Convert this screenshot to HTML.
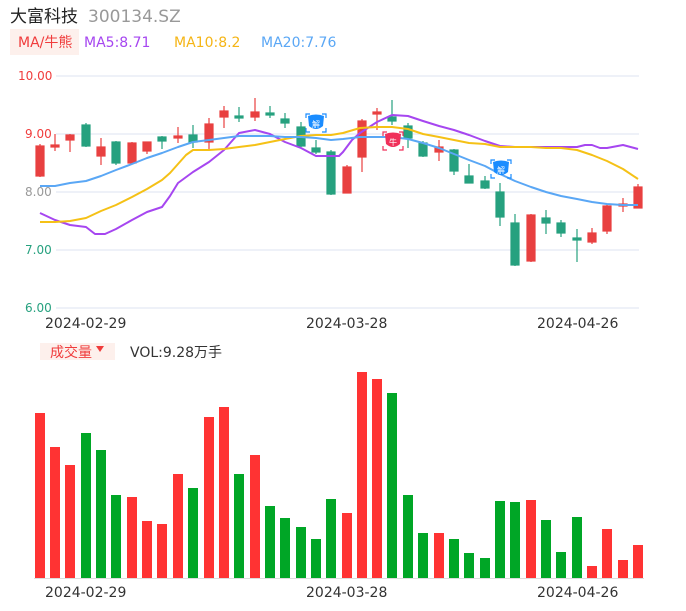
<!DOCTYPE html>
<html><head><meta charset="utf-8"><style>
body{margin:0;background:#fff;width:686px;height:606px;overflow:hidden;font-family:"Liberation Sans","Noto Sans CJK SC",sans-serif}
svg text{font-family:"DejaVu Sans","Noto Sans CJK SC",sans-serif}
</style></head><body>
<svg width="686" height="606" xmlns="http://www.w3.org/2000/svg">
<text x="10" y="22" font-size="17" fill="#222" font-family="'Noto Sans CJK SC',sans-serif">大富科技</text>
<text x="88" y="22" font-size="17" fill="#999">300134.SZ</text>
<rect x="10" y="29" width="69" height="26" fill="#fdf0ec"/>
<text x="18" y="47" font-size="14" fill="#f03c3c">MA/牛熊</text>
<text x="84" y="47" font-size="14" fill="#a646f0">MA5:8.71</text>
<text x="174" y="47" font-size="14" fill="#f5b516">MA10:8.2</text>
<text x="261" y="47" font-size="14" fill="#5aa7f5">MA20:7.76</text>
<g stroke="#dde3f0" stroke-width="1">
<line x1="56" y1="76" x2="639" y2="76"/><line x1="56" y1="134" x2="639" y2="134"/><line x1="56" y1="192" x2="639" y2="192"/><line x1="56" y1="250" x2="639" y2="250"/><line x1="56" y1="308" x2="639" y2="308"/>
</g>
<g font-size="12">
<text x="18" y="80" fill="#f03c3c">10.00</text>
<text x="25" y="138" fill="#f03c3c">9.00</text>
<text x="25" y="196" fill="#999">8.00</text>
<text x="25" y="254" fill="#26a17f">7.00</text>
<text x="25" y="312" fill="#26a17f">6.00</text>
</g>
<g font-size="14" fill="#333">
<text x="45" y="328">2024-02-29</text><text x="306" y="328">2024-03-28</text><text x="537" y="328">2024-04-26</text>
<text x="45" y="597">2024-02-29</text><text x="306" y="597">2024-03-28</text><text x="537" y="597">2024-04-26</text>
</g>
<g stroke-width="1.2">
<g fill="#e84040" stroke="#e84040">
<line x1="40" y1="144" x2="40" y2="177"/><rect x="36" y="146" width="8" height="30"/>
<line x1="55" y1="134" x2="55" y2="151"/><rect x="51" y="145" width="8" height="2"/>
<line x1="70" y1="134" x2="70" y2="152"/><rect x="66" y="135" width="8" height="5"/>
<line x1="101" y1="138" x2="101" y2="165"/><rect x="97" y="147" width="8" height="9"/>
<line x1="132" y1="142" x2="132" y2="164"/><rect x="128" y="143" width="8" height="20"/>
<line x1="147" y1="142" x2="147" y2="154"/><rect x="143" y="142" width="8" height="9"/>
<line x1="178" y1="127" x2="178" y2="143"/><rect x="174" y="136" width="8" height="2"/>
<line x1="209" y1="118" x2="209" y2="150"/><rect x="205" y="124" width="8" height="18"/>
<line x1="224" y1="106" x2="224" y2="128"/><rect x="220" y="111" width="8" height="6"/>
<line x1="255" y1="98" x2="255" y2="121"/><rect x="251" y="112" width="8" height="5"/>
<line x1="347" y1="165" x2="347" y2="193"/><rect x="343" y="167" width="8" height="26"/>
<line x1="362" y1="119" x2="362" y2="172"/><rect x="358" y="121" width="8" height="36"/>
<line x1="377" y1="108" x2="377" y2="130"/><rect x="373" y="112" width="8" height="2"/>
<line x1="439" y1="140" x2="439" y2="161"/><rect x="435" y="147" width="8" height="5"/>
<line x1="531" y1="214" x2="531" y2="262"/><rect x="527" y="215" width="8" height="46"/>
<line x1="592" y1="228" x2="592" y2="244"/><rect x="588" y="233" width="8" height="9"/>
<line x1="607" y1="204" x2="607" y2="234"/><rect x="603" y="206" width="8" height="25"/>
<line x1="623" y1="198" x2="623" y2="212"/><rect x="619" y="204" width="8" height="2"/>
<line x1="638" y1="184" x2="638" y2="208"/><rect x="634" y="187" width="8" height="21"/>
</g>
<g fill="#26a17f" stroke="#26a17f">
<line x1="86" y1="123" x2="86" y2="147"/><rect x="82" y="125" width="8" height="21"/>
<line x1="116" y1="141" x2="116" y2="165"/><rect x="112" y="142" width="8" height="21"/>
<line x1="162" y1="136" x2="162" y2="149"/><rect x="158" y="137" width="8" height="4"/>
<line x1="193" y1="125" x2="193" y2="148"/><rect x="189" y="135" width="8" height="7"/>
<line x1="239" y1="107" x2="239" y2="122"/><rect x="235" y="116" width="8" height="2"/>
<line x1="270" y1="106" x2="270" y2="118"/><rect x="266" y="113" width="8" height="2"/>
<line x1="285" y1="113" x2="285" y2="128"/><rect x="281" y="119" width="8" height="4"/>
<line x1="301" y1="122" x2="301" y2="147"/><rect x="297" y="127" width="8" height="19"/>
<line x1="316" y1="140" x2="316" y2="154"/><rect x="312" y="148" width="8" height="4"/>
<line x1="331" y1="150" x2="331" y2="195"/><rect x="327" y="152" width="8" height="42"/>
<line x1="392" y1="100" x2="392" y2="125"/><rect x="388" y="117" width="8" height="4"/>
<line x1="408" y1="123" x2="408" y2="148"/><rect x="404" y="126" width="8" height="12"/>
<line x1="423" y1="141" x2="423" y2="157"/><rect x="419" y="143" width="8" height="13"/>
<line x1="454" y1="149" x2="454" y2="175"/><rect x="450" y="150" width="8" height="21"/>
<line x1="469" y1="164" x2="469" y2="183"/><rect x="465" y="176" width="8" height="7"/>
<line x1="485" y1="176" x2="485" y2="189"/><rect x="481" y="181" width="8" height="7"/>
<line x1="500" y1="183" x2="500" y2="226"/><rect x="496" y="192" width="8" height="25"/>
<line x1="515" y1="214" x2="515" y2="266"/><rect x="511" y="223" width="8" height="42"/>
<line x1="546" y1="210" x2="546" y2="234"/><rect x="542" y="218" width="8" height="5"/>
<line x1="561" y1="220" x2="561" y2="237"/><rect x="557" y="223" width="8" height="10"/>
<line x1="577" y1="229" x2="577" y2="262"/><rect x="573" y="238" width="8" height="2"/>
</g>
</g>
<g fill="none" stroke-width="2" stroke-linejoin="round">
<polyline stroke="#a646f0" points="40,213 55,220 70,225 86,227 95,234 105,234 116,229 132,220 147,212 162,207 170,196 178,183 193,172 209,162 224,150 239,133 255,130 270,134 285,142 301,148 316,156 331,156 339,156 343,152 352,140 360,133 377,122 392,115 408,116 423,121 439,126 454,130 469,135 485,141 500,146 515,147 531,147 546,147 561,147 577,147 585,145 592,145 600,148 607,148 623,145 638,149"/>
<polyline stroke="#f5c116" points="40,222 55,222 70,221 86,218 101,211 116,205 132,197 147,189 162,180 170,173 178,164 186,155 193,150 209,150 224,149 239,147 255,145 270,142 285,139 301,136 316,135 331,135 343,133 360,128 377,127 392,127 408,129 423,134 439,137 454,140 469,143 485,144 500,147 515,147 531,147 546,148 561,148 577,150 592,155 607,161 623,169 638,179"/>
<polyline stroke="#5aa7f5" points="40,186 55,186 70,183 86,181 101,176 116,170 132,164 147,158 162,153 178,147 193,142 209,140 224,138 239,136 255,136 270,136 285,137 301,137 316,138 331,140 343,139 360,137 377,137 392,137 408,139 423,143 439,148 454,154 469,160 485,166 500,174 515,181 531,187 546,192 561,196 577,199 592,202 607,204 623,205 638,205"/>
</g>
<g fill="none" stroke-width="1.2">
<g stroke="#1a8cff" transform="translate(316,123)"><path d="M-10,-5V-9H-6M6,-9H10V-5M10,5V9H6M-6,9H-10V5"/></g>
<g stroke="#f0305a" transform="translate(393,141)"><path d="M-10,-5V-9H-6M6,-9H10V-5M10,5V9H6M-6,9H-10V5"/></g>
<g stroke="#1a8cff" transform="translate(501,169)"><path d="M-10,-5V-9H-6M6,-9H10V-5M10,5V9H6M-6,9H-10V5"/></g>
</g>
<path d="M308,116 Q316,113 324,116 L323,126 Q316,132 309,126 Z" fill="#1a8cff"/><text x="316" y="127" font-size="8" fill="#fff" text-anchor="middle">解</text>
<path d="M385,134 Q393,131 401,134 L400,144 Q393,150 386,144 Z" fill="#f0305a"/><text x="393" y="145" font-size="8" fill="#fff" text-anchor="middle">牛</text>
<path d="M493,162 Q501,159 509,162 L508,172 Q501,178 494,172 Z" fill="#1a8cff"/><text x="501" y="173" font-size="8" fill="#fff" text-anchor="middle">解</text>
<rect x="40" y="343" width="75" height="17" fill="#fdf0ec"/>
<text x="50" y="357" font-size="14" fill="#f03c3c" font-family="'Noto Sans CJK SC',sans-serif">成交量</text>
<path d="M96,346 L104,346 L100,352 Z" fill="#f03c3c"/>
<text x="130" y="357" font-size="14" fill="#333">VOL:9.28万手</text>
<line x1="34" y1="578.5" x2="644" y2="578.5" stroke="#ddd"/>
<g fill="#ff3333">
<rect x="35" y="413" width="10" height="165"/><rect x="50" y="447" width="10" height="131"/><rect x="65" y="465" width="10" height="113"/>
<rect x="127" y="497" width="10" height="81"/><rect x="142" y="521" width="10" height="57"/><rect x="157" y="524" width="10" height="54"/><rect x="173" y="474" width="10" height="104"/>
<rect x="204" y="417" width="10" height="161"/><rect x="219" y="407" width="10" height="171"/><rect x="250" y="455" width="10" height="123"/>
<rect x="342" y="513" width="10" height="65"/><rect x="357" y="372" width="10" height="206"/><rect x="372" y="379" width="10" height="199"/>
<rect x="434" y="533" width="10" height="45"/><rect x="526" y="500" width="10" height="78"/>
<rect x="587" y="566" width="10" height="12"/><rect x="602" y="529" width="10" height="49"/><rect x="618" y="560" width="10" height="18"/><rect x="633" y="545" width="10" height="33"/>
</g>
<g fill="#00a626">
<rect x="81" y="433" width="10" height="145"/><rect x="96" y="450" width="10" height="128"/><rect x="111" y="495" width="10" height="83"/>
<rect x="188" y="488" width="10" height="90"/><rect x="234" y="474" width="10" height="104"/>
<rect x="265" y="506" width="10" height="72"/><rect x="280" y="518" width="10" height="60"/><rect x="296" y="527" width="10" height="51"/><rect x="311" y="539" width="10" height="39"/><rect x="326" y="499" width="10" height="79"/>
<rect x="387" y="393" width="10" height="185"/><rect x="403" y="495" width="10" height="83"/><rect x="418" y="533" width="10" height="45"/>
<rect x="449" y="539" width="10" height="39"/><rect x="464" y="553" width="10" height="25"/><rect x="480" y="558" width="10" height="20"/><rect x="495" y="501" width="10" height="77"/><rect x="510" y="502" width="10" height="76"/>
<rect x="541" y="520" width="10" height="58"/><rect x="556" y="552" width="10" height="26"/><rect x="572" y="517" width="10" height="61"/>
</g>
</svg>
</body></html>
